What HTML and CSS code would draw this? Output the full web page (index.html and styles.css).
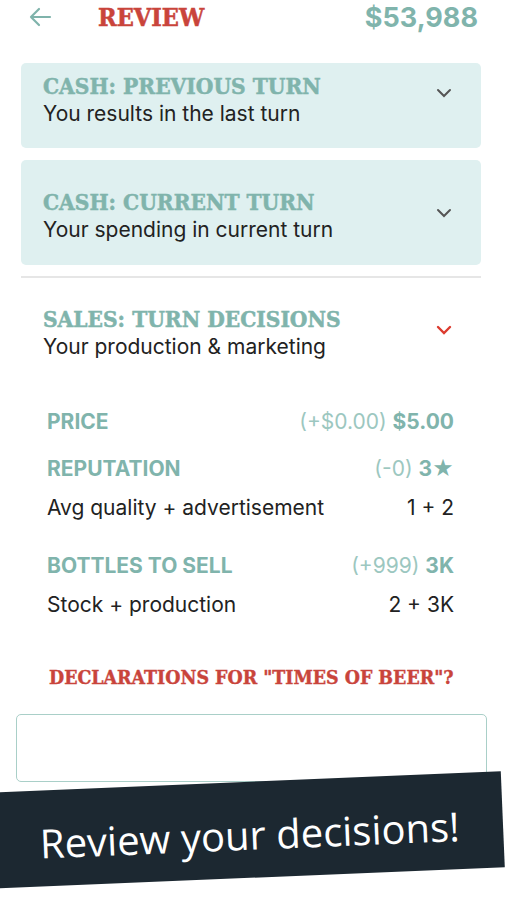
FILE: index.html
```html
<!DOCTYPE html>
<html lang="en">
<head>
  <meta charset="UTF-8">
  <meta name="viewport" content="width=device-width, initial-scale=1.0">
  <title>Review</title>
  <link rel="stylesheet" href="styles.css">
</head>
<body>
  <div class="top-bar">
    <a href="#" class="back-arrow">
      <svg width="24" height="20" viewBox="0 0 24 20"><path d="M22 10H3M11 2L3 10l8 8" fill="none" stroke="#7fb3ab" stroke-width="2.2" stroke-linecap="round" stroke-linejoin="round"/></svg>
    </a>
    <h1 class="page-title">REVIEW</h1>
    <div class="cash">$53,988</div>
  </div>

  <div class="content">
    <div class="panel panel-first">
      <div class="panel-text">
        <h2 class="slab-title">CASH: PREVIOUS TURN</h2>
        <p class="subtitle">You results in the last turn</p>
      </div>
      <svg class="chevron" width="16" height="10" viewBox="0 0 16 10"><path d="M2 2l6 6 6-6" fill="none" stroke="#555" stroke-width="2" stroke-linecap="round"/></svg>
    </div>

    <div class="panel panel-second">
      <div class="panel-text">
        <h2 class="slab-title">CASH: CURRENT TURN</h2>
        <p class="subtitle">Your spending in current turn</p>
      </div>
      <svg class="chevron" width="16" height="10" viewBox="0 0 16 10"><path d="M2 2l6 6 6-6" fill="none" stroke="#555" stroke-width="2" stroke-linecap="round"/></svg>
    </div>

    <hr class="divider">

    <div class="panel panel-open">
      <div class="panel-text">
        <h2 class="slab-title">SALES: TURN DECISIONS</h2>
        <p class="subtitle">Your production &amp; marketing</p>
      </div>
      <svg class="chevron" width="16" height="10" viewBox="0 0 16 10"><path d="M2 2l6 6 6-6" fill="none" stroke="#dc3b2f" stroke-width="2.4" stroke-linecap="round"/></svg>
    </div>

    <div class="stats">
      <div class="stat-group">
        <div class="stat-row">
          <span class="stat-label">PRICE</span>
          <span class="stat-value"><span class="delta">(+$0.00)</span> <b>$5.00</b></span>
        </div>
      </div>
      <div class="stat-group">
        <div class="stat-row">
          <span class="stat-label">REPUTATION</span>
          <span class="stat-value"><span class="delta">(-0)</span> <b>3★</b></span>
        </div>
        <div class="stat-row detail">
          <span>Avg quality + advertisement</span>
          <span>1 + 2</span>
        </div>
      </div>
      <div class="stat-group">
        <div class="stat-row">
          <span class="stat-label">BOTTLES TO SELL</span>
          <span class="stat-value"><span class="delta">(+999)</span> <b>3K</b></span>
        </div>
        <div class="stat-row detail">
          <span>Stock + production</span>
          <span>2 + 3K</span>
        </div>
      </div>
    </div>

    <h3 class="declare-title">DECLARATIONS FOR "TIMES OF BEER"?</h3>
    <textarea class="declare-box"></textarea>
  </div>

  <div class="banner">
    <span>Review your decisions!</span>
  </div>
</body>
</html>
```

FILE: styles.css
```css
body {
  margin: 0;
  font-family: Inter, "Noto Sans", sans-serif;
  background-color: #fff;
  color: #222;
  width: 507px;
  height: 900px;
  overflow: hidden;
  position: relative;
}
.top-bar {
  display: flex;
  align-items: center;
  height: 34px;
  padding: 0 29px 0 28px;
}
.back-arrow {
  display: flex;
  width: 70px;
}
.page-title {
  margin: 0;
  flex: 1;
  font-family: "DejaVu Serif Condensed", "DejaVu Serif", serif;
  font-weight: bold;
  font-size: 25px;
  color: #c9443b;
  -webkit-text-stroke: 0.5px #c9443b;
}
.cash {
  font-family: Inter, sans-serif;
  font-weight: 700;
  font-size: 27px;
  color: #80b4ac;
}
.content {
  padding: 29px 26px 0 21px;
}
.panel {
  display: flex;
  align-items: flex-start;
  justify-content: space-between;
  padding: 0 29px 0 22px;
  border-radius: 5px;
  box-sizing: border-box;
}
.panel-first {
  background-color: #dff0f0;
  height: 85px;
  padding-top: 9px;
}
.panel-second {
  background-color: #dff0f0;
  height: 105px;
  margin-top: 12px;
  padding-top: 28px;
}
.panel-open {
  padding-top: 27px;
}
.slab-title {
  margin: 0;
  font-family: "DejaVu Serif Condensed", "DejaVu Serif", serif;
  font-weight: bold;
  font-size: 22.5px;
  color: #80b4ac;
  -webkit-text-stroke: 0.5px #80b4ac;
  line-height: 28px;
}
.subtitle {
  margin: 0;
  font-size: 21px;
  line-height: 28px;
  color: #222;
}
.chevron {
  margin-top: 20px;
}
.panel-first .chevron {
  margin-top: 16px;
}
.divider {
  border: none;
  border-top: 2px solid #e6e6e6;
  margin: 11px 0 0;
}
.stats {
  padding: 49px 27px 0 26px;
  display: flex;
  flex-direction: column;
  gap: 23px;
}
.stat-group {
  display: flex;
  flex-direction: column;
  gap: 15px;
}
.stat-row {
  display: flex;
  justify-content: space-between;
  align-items: baseline;
  font-size: 21px;
  line-height: 24px;
}
.stat-label, .stat-value b {
  font-weight: 700;
  color: #80b4ac;
}
.delta {
  color: #9cc7c0;
}
.detail {
  color: #222;
}
.stat-group:nth-child(2) .detail {
  margin-bottom: 11px;
}
.declare-title {
  margin: 49px 0 0 28px;
  font-family: "DejaVu Serif Condensed", "DejaVu Serif", serif;
  font-weight: bold;
  font-size: 19.4px;
  color: #c9443b;
  -webkit-text-stroke: 0.4px #c9443b;
}
.declare-box {
  display: block;
  width: 471px;
  height: 68px;
  margin: 25px 0 0 -5px;
  border: 1.5px solid #a9cfc8;
  border-radius: 5px;
  box-sizing: border-box;
  resize: none;
}
.banner {
  position: absolute;
  left: -12px;
  top: 782px;
  width: 515px;
  height: 96px;
  background-color: #1c2831;
  transform: rotate(-2.4deg);
  display: flex;
  align-items: center;
  justify-content: center;
}
.banner span {
  font-family: "Open Sans", sans-serif;
  font-size: 40px;
  color: #fff;
  padding: 8px 0 0 8px;
}
```
